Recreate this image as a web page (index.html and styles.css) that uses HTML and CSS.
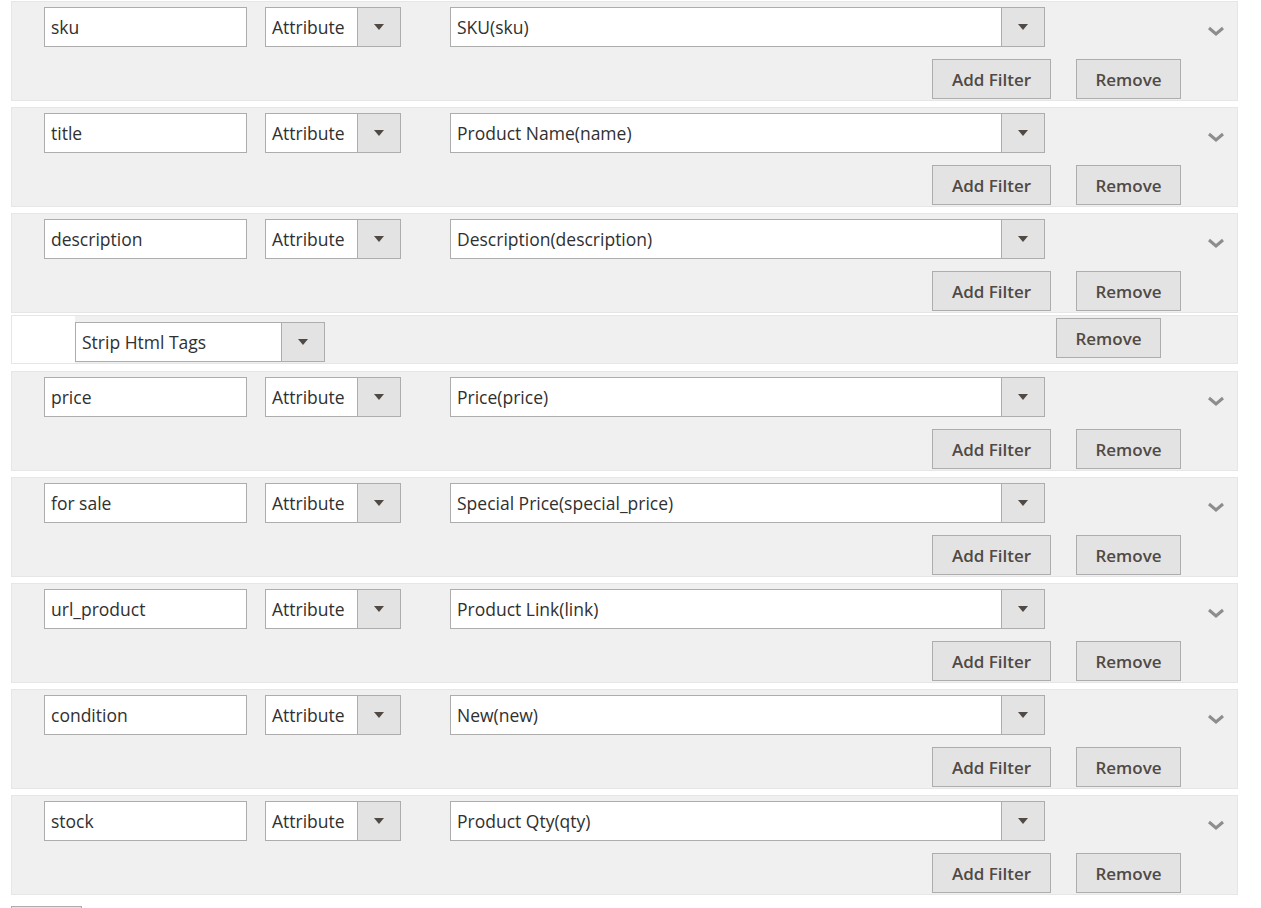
FILE: index.html
```html
<!DOCTYPE html>
<html>
  <head>
    <title>Feed Attribute Mapping</title>
    <meta charset="UTF-8">
    <meta name="viewport" content="width=device-width, initial-scale=1.0">
    <link rel="stylesheet" href="styles.css">
  </head>
  <body>
    <div class="mapping">
      <div class="row">
        <div class="row-main">
          <div class="field">sku</div>
          <div class="select select-type"><span class="select-text">Attribute</span><span class="select-arrow"></span></div>
          <div class="select select-map"><span class="select-text">SKU(sku)</span><span class="select-arrow"></span></div>
          <svg class="toggle" width="18" height="10" viewBox="0 0 18 10"><polyline points="2,2 9,8 16,2" /></svg>
        </div>
        <div class="row-actions">
          <button class="btn btn-filter">Add Filter</button>
          <button class="btn btn-remove">Remove</button>
        </div>
      </div>

      <div class="row">
        <div class="row-main">
          <div class="field">title</div>
          <div class="select select-type"><span class="select-text">Attribute</span><span class="select-arrow"></span></div>
          <div class="select select-map"><span class="select-text">Product Name(name)</span><span class="select-arrow"></span></div>
          <svg class="toggle" width="18" height="10" viewBox="0 0 18 10"><polyline points="2,2 9,8 16,2" /></svg>
        </div>
        <div class="row-actions">
          <button class="btn btn-filter">Add Filter</button>
          <button class="btn btn-remove">Remove</button>
        </div>
      </div>

      <div class="row row-has-filter">
        <div class="row-main">
          <div class="field">description</div>
          <div class="select select-type"><span class="select-text">Attribute</span><span class="select-arrow"></span></div>
          <div class="select select-map"><span class="select-text">Description(description)</span><span class="select-arrow"></span></div>
          <svg class="toggle" width="18" height="10" viewBox="0 0 18 10"><polyline points="2,2 9,8 16,2" /></svg>
        </div>
        <div class="row-actions">
          <button class="btn btn-filter">Add Filter</button>
          <button class="btn btn-remove">Remove</button>
        </div>
      </div>

      <div class="filter-row">
        <div class="filter-inner">
          <div class="select select-filter"><span class="select-text">Strip Html Tags</span><span class="select-arrow"></span></div>
          <button class="btn btn-remove btn-filter-remove">Remove</button>
        </div>
      </div>

      <div class="row">
        <div class="row-main">
          <div class="field">price</div>
          <div class="select select-type"><span class="select-text">Attribute</span><span class="select-arrow"></span></div>
          <div class="select select-map"><span class="select-text">Price(price)</span><span class="select-arrow"></span></div>
          <svg class="toggle" width="18" height="10" viewBox="0 0 18 10"><polyline points="2,2 9,8 16,2" /></svg>
        </div>
        <div class="row-actions">
          <button class="btn btn-filter">Add Filter</button>
          <button class="btn btn-remove">Remove</button>
        </div>
      </div>

      <div class="row">
        <div class="row-main">
          <div class="field">for sale</div>
          <div class="select select-type"><span class="select-text">Attribute</span><span class="select-arrow"></span></div>
          <div class="select select-map"><span class="select-text">Special Price(special_price)</span><span class="select-arrow"></span></div>
          <svg class="toggle" width="18" height="10" viewBox="0 0 18 10"><polyline points="2,2 9,8 16,2" /></svg>
        </div>
        <div class="row-actions">
          <button class="btn btn-filter">Add Filter</button>
          <button class="btn btn-remove">Remove</button>
        </div>
      </div>

      <div class="row">
        <div class="row-main">
          <div class="field">url_product</div>
          <div class="select select-type"><span class="select-text">Attribute</span><span class="select-arrow"></span></div>
          <div class="select select-map"><span class="select-text">Product Link(link)</span><span class="select-arrow"></span></div>
          <svg class="toggle" width="18" height="10" viewBox="0 0 18 10"><polyline points="2,2 9,8 16,2" /></svg>
        </div>
        <div class="row-actions">
          <button class="btn btn-filter">Add Filter</button>
          <button class="btn btn-remove">Remove</button>
        </div>
      </div>

      <div class="row">
        <div class="row-main">
          <div class="field">condition</div>
          <div class="select select-type"><span class="select-text">Attribute</span><span class="select-arrow"></span></div>
          <div class="select select-map"><span class="select-text">New(new)</span><span class="select-arrow"></span></div>
          <svg class="toggle" width="18" height="10" viewBox="0 0 18 10"><polyline points="2,2 9,8 16,2" /></svg>
        </div>
        <div class="row-actions">
          <button class="btn btn-filter">Add Filter</button>
          <button class="btn btn-remove">Remove</button>
        </div>
      </div>

      <div class="row">
        <div class="row-main">
          <div class="field">stock</div>
          <div class="select select-type"><span class="select-text">Attribute</span><span class="select-arrow"></span></div>
          <div class="select select-map"><span class="select-text">Product Qty(qty)</span><span class="select-arrow"></span></div>
          <svg class="toggle" width="18" height="10" viewBox="0 0 18 10"><polyline points="2,2 9,8 16,2" /></svg>
        </div>
        <div class="row-actions">
          <button class="btn btn-filter">Add Filter</button>
          <button class="btn btn-remove">Remove</button>
        </div>
      </div>

      <button class="btn btn-add-row"></button>
    </div>
  </body>
</html>
```

FILE: styles.css
```css
body {
  font-family: "Open Sans", "Liberation Sans", sans-serif;
  font-size: 17.5px;
  color: #303030;
  margin: 0;
  padding: 0;
  background: #fff;
}
.mapping {
  width: 1227px;
  padding: 1px 0 0 11px;
}
.row {
  box-sizing: border-box;
  height: 100px;
  border: 1px solid #e6e6e6;
  background-color: #f0f0f0;
  padding: 5px 56px 1px 32px;
  margin-bottom: 6px;
}
.row-has-filter {
  margin-bottom: 2px;
}
.row-main {
  display: flex;
  align-items: center;
  height: 40px;
}
.row-main > * {
  flex-shrink: 0;
}
.field {
  box-sizing: border-box;
  width: 203px;
  height: 40px;
  border: 1px solid #adadad;
  background: #fff;
  padding-left: 6px;
  line-height: 38px;
}
.select {
  box-sizing: border-box;
  display: flex;
  height: 40px;
  border: 1px solid #adadad;
  background: #fff;
}
.select-text {
  flex: 1;
  padding-left: 6px;
  line-height: 38px;
  white-space: nowrap;
}
.select-arrow {
  position: relative;
  width: 42px;
  border-left: 1px solid #adadad;
  background: #e3e3e3;
}
.select-arrow::after {
  content: "";
  position: absolute;
  left: 16px;
  top: 16px;
  border-left: 5px solid transparent;
  border-right: 5px solid transparent;
  border-top: 6px solid #514943;
}
.select-type {
  width: 136px;
  margin-left: 18px;
}
.select-map {
  width: 595px;
  margin-left: 49px;
}
.toggle {
  margin-left: 162px;
  margin-top: 7px;
}
.toggle polyline {
  fill: none;
  stroke: #8d8d8d;
  stroke-width: 3;
}
.row-actions {
  display: flex;
  justify-content: flex-end;
  gap: 25px;
  margin-top: 12px;
}
.btn {
  box-sizing: border-box;
  height: 40px;
  border: 1px solid #adadad;
  background-color: #e3e3e3;
  color: #514943;
  font-family: "Open Sans", "Liberation Sans", sans-serif;
  font-size: 17px;
  font-weight: 600;
  padding: 0;
  cursor: pointer;
}
.btn-filter {
  width: 119px;
}
.btn-remove {
  width: 105px;
}
.filter-row {
  box-sizing: border-box;
  border: 1px solid #e6e6e6;
  background: #fff;
  padding-left: 63px;
  margin-bottom: 7px;
}
.filter-inner {
  box-sizing: border-box;
  display: flex;
  align-items: flex-start;
  height: 47px;
  padding-top: 6px;
  background: #f0f0f0;
}
.select-filter {
  width: 250px;
}
.btn-filter-remove {
  margin-left: 731px;
  margin-top: -4px;
}
.btn-add-row {
  display: block;
  width: 71px;
  margin-top: 11px;
}
```
